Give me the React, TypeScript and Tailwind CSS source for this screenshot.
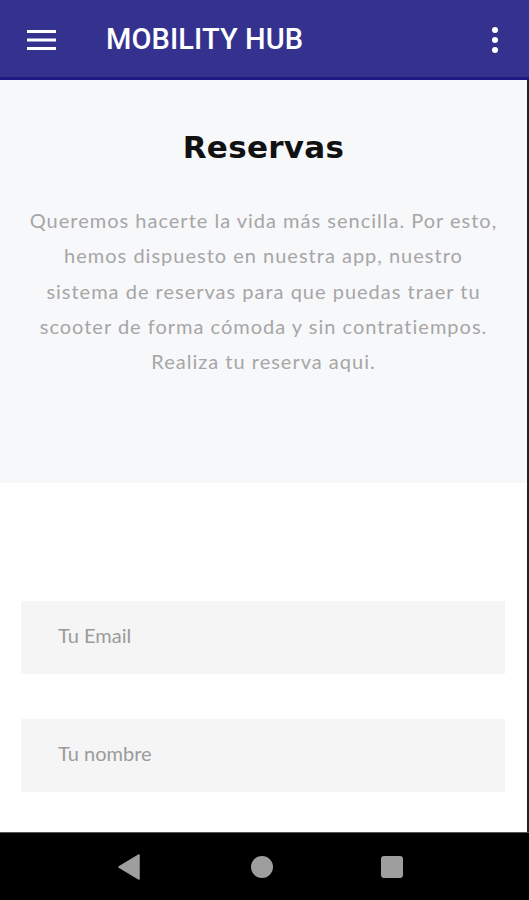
export default function App() {
  return (
    <div className="w-[529px] h-[900px] flex flex-col bg-white overflow-hidden">
      {/* app bar */}
      <div className="h-[80px] bg-[#35328f] flex items-center shrink-0 border-b-[3px] border-[#1d1a86]">
        <div className="w-[106px] flex items-center pl-[27px] pt-[2px]">
          <svg width="29" height="22" viewBox="0 0 29 22">
            <rect x="0" y="1" width="29" height="3" fill="#fff" />
            <rect x="0" y="9.5" width="29" height="3" fill="#fff" />
            <rect x="0" y="18" width="29" height="3" fill="#fff" />
          </svg>
        </div>
        <h1
          className="flex-1 text-white text-[29px] font-medium tracking-[0.1px] pt-[2px]"
          style={{ fontFamily: "Roboto, sans-serif" }}
        >
          MOBILITY HUB
        </h1>
        <div className="pr-[31px] pt-[2px] flex flex-col gap-[4px] items-center">
          <span className="w-[6px] h-[6px] rounded-full bg-white" />
          <span className="w-[6px] h-[6px] rounded-full bg-white" />
          <span className="w-[6px] h-[6px] rounded-full bg-white" />
        </div>
      </div>

      <div className="flex-1 flex flex-col border-r-[2px] border-[#222]">
        {/* intro */}
        <div className="h-[403px] bg-[#f7f8fa] flex flex-col items-center pt-[47px] shrink-0">
          <h2
            className="text-[31px] font-bold text-[#111] tracking-[0.3px] leading-[40px]"
            style={{ fontFamily: "'DejaVu Sans', sans-serif" }}
          >
            Reservas
          </h2>
          <p
            className="mt-[36px] px-[4px] text-center text-[20px] leading-[35.3px] text-[#a6a6a6] tracking-[1px]"
            style={{ fontFamily: "Lato, sans-serif" }}
          >
            Queremos hacerte la vida más sencilla. Por esto,
            <br />
            hemos dispuesto en nuestra app, nuestro
            <br />
            sistema de reservas para que puedas traer tu
            <br />
            scooter de forma cómoda y sin contratiempos.
            <br />
            Realiza tu reserva aqui.
          </p>
        </div>

        {/* form */}
        <div className="flex flex-col gap-[45px] pt-[118px] px-[21px] pr-[22px]">
          <div className="h-[73px] bg-[#f5f5f5] flex items-center pl-[37px] pb-[5px]">
            <span
              className="text-[20px] text-[#9b9b9b]"
              style={{ fontFamily: "Lato, sans-serif" }}
            >
              Tu Email
            </span>
          </div>
          <div className="h-[73px] bg-[#f5f5f5] flex items-center pl-[37px] pb-[5px]">
            <span
              className="text-[20px] text-[#9b9b9b]"
              style={{ fontFamily: "Lato, sans-serif" }}
            >
              Tu nombre
            </span>
          </div>
        </div>
      </div>

      {/* system nav bar */}
      <div className="h-[68px] bg-black flex items-center shrink-0 border-t border-[#555]">
        <div className="flex items-center w-full">
          <div className="w-[118px]" />
          <svg width="22" height="26" viewBox="0 0 22 26">
            <path d="M21 1 L21 25 L1 13 Z" fill="#9e9e9e" stroke="#9e9e9e" strokeWidth="1.5" strokeLinejoin="round" />
          </svg>
          <div className="w-[111px]" />
          <span className="w-[22px] h-[22px] rounded-full bg-[#9e9e9e]" />
          <div className="w-[108px]" />
          <span className="w-[22px] h-[22px] rounded-[3px] bg-[#9e9e9e]" />
        </div>
      </div>
    </div>
  );
}
